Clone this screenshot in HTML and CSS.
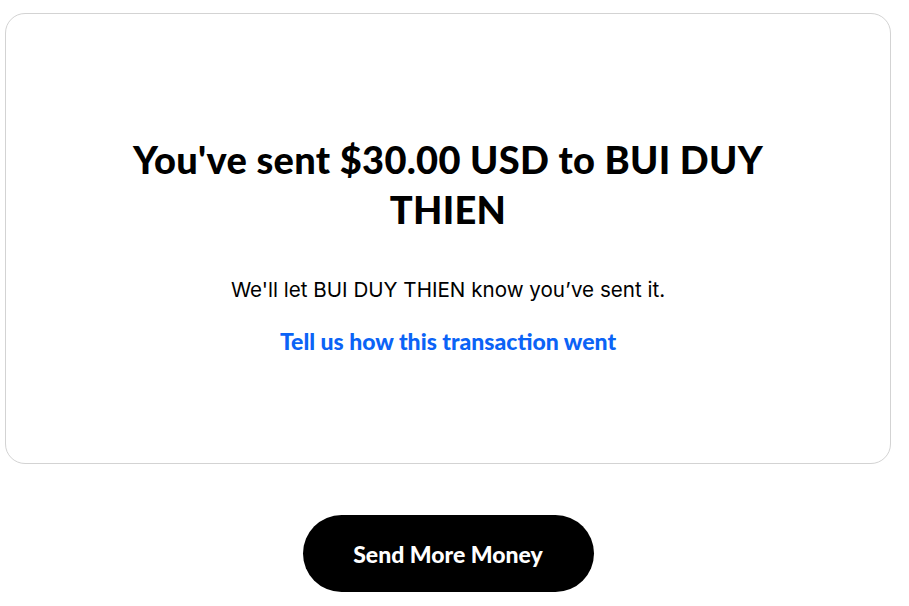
FILE: index.html
```html
<!DOCTYPE html>
<html lang="en">
<head>
  <meta charset="UTF-8" />
  <meta name="viewport" content="width=device-width, initial-scale=1.0" />
  <title>Payment sent</title>
  <link rel="stylesheet" href="styles.css">
</head>
<body>
  <main class="page">
    <section class="result-card">
      <h1 class="result-title">You've sent $30.00 USD to BUI DUY THIEN</h1>
      <p class="result-note">We'll let BUI DUY THIEN know you’ve sent it.</p>
      <a class="feedback-link" href="#">Tell us how this transaction went</a>
    </section>

    <div class="actions">
      <button class="send-more" type="button">Send More Money</button>
    </div>
  </main>
</body>
</html>
```

FILE: styles.css
```css
body {
  margin: 0;
  background: #fff;
  color: #000;
  font-family: Lato, "Noto Sans", sans-serif;
}

.page {
  width: 886px;
  padding: 13px 0 0 5px;
}

.result-card {
  height: 451px;
  box-sizing: border-box;
  border: 1px solid #d3d3d3;
  border-radius: 20px;
  display: flex;
  flex-direction: column;
  align-items: center;
  padding-top: 120px;
}

.result-title {
  margin: 0;
  max-width: 680px;
  text-align: center;
  font-size: 38px;
  line-height: 50px;
  font-weight: 900;
  letter-spacing: 0.3px;
}

.result-note {
  margin: 42px 0 0;
  font-family: Inter, "Noto Sans", sans-serif;
  font-size: 20.6px;
  line-height: 28px;
}

.feedback-link {
  margin-top: 23px;
  color: #0b63f6;
  text-decoration: none;
  font-size: 23px;
  font-weight: 900;
}

.actions {
  display: flex;
  justify-content: center;
  padding-top: 51px;
}

.send-more {
  width: 291px;
  height: 77px;
  border: 0;
  border-radius: 40px;
  background: #000;
  color: #fff;
  font-family: Lato, "Noto Sans", sans-serif;
  font-size: 23px;
  font-weight: 900;
  cursor: pointer;
}
```
